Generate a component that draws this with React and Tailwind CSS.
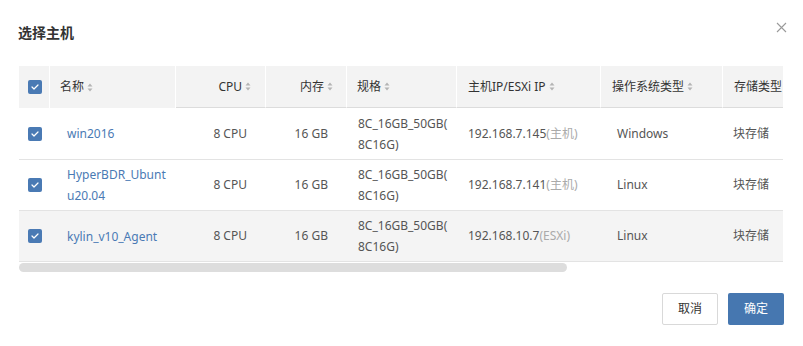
import React from 'react';

const cols = {
  check: 'w-[31px]',
  name: 'w-[126px]',
  cpu: 'w-[90px]',
  mem: 'w-[81px]',
  spec: 'w-[110px]',
  ip: 'w-[144px]',
  os: 'w-[122px]',
  store: 'w-[200px]',
};

const rows = [
  { name: 'win2016', ip: '192.168.7.145', ipType: '(主机)', os: 'Windows' },
  { name: 'HyperBDR_Ubuntu20.04', ip: '192.168.7.141', ipType: '(主机)', os: 'Linux' },
  { name: 'kylin_v10_Agent', ip: '192.168.10.7', ipType: '(ESXi)', os: 'Linux', hover: true },
];

const Check = () => (
  <span className="flex h-[14px] w-[14px] items-center justify-center rounded-[2px] bg-[#4a7ab4]">
    <svg width="8" height="6" viewBox="0 0 8 6" fill="none">
      <path d="M1 3l2 2 4-4" stroke="white" strokeWidth="1.2" strokeLinecap="round" strokeLinejoin="round" />
    </svg>
  </span>
);

const Sort = () => (
  <svg width="6" height="9" viewBox="0 0 6 9" className="ml-[3px] shrink-0">
    <path d="M3 0.5L5.5 3.5H0.5Z" fill="#b4b4b4" />
    <path d="M3 8.5L5.5 5.5H0.5Z" fill="#b4b4b4" />
  </svg>
);

const HeadCell = ({ w, children, className = '', line = true }) => (
  <div className={`${w} shrink-0 h-full flex items-center border-r border-white ${line ? 'border-b border-b-[#dcdcdc]' : ''} ${className}`}>
    {children}
  </div>
);

export default function App() {
  return (
    <div className="w-[803px] h-[346px] bg-white text-[#555] text-[12px] font-['Noto_Sans','Noto_Sans_CJK_SC',sans-serif] relative">
      <div className="flex justify-between pl-[18px] pr-[18px] pt-[24px] h-[66px] items-start">
        <h1 className="text-[14px] font-bold text-[#333] leading-[18px]">选择主机</h1>
        <svg width="11" height="11" viewBox="0 0 11 11" className="-mt-[2px] mr-[-2px]">
          <path d="M1 1L10 10M10 1L1 10" stroke="#9a9a9a" strokeWidth="1.1" />
        </svg>
      </div>

      <div className="mx-[19px] w-[764px] overflow-hidden">
        <div className="w-[1000px]">
          <div className="flex h-[42px] bg-[#f3f3f3] text-[#333]">
            <HeadCell w={cols.check} line={false} className="pl-[9px]"><Check /></HeadCell>
            <HeadCell w={cols.name} line={false} className="pl-[10px]">名称<Sort /></HeadCell>
            <HeadCell w={cols.cpu} className="justify-end pr-[14px]">CPU<Sort /></HeadCell>
            <HeadCell w={cols.mem} className="justify-end pr-[13px]">内存<Sort /></HeadCell>
            <HeadCell w={cols.spec} className="pl-[10px]">规格<Sort /></HeadCell>
            <HeadCell w={cols.ip} className="pl-[11px]">主机IP/ESXi IP<Sort /></HeadCell>
            <HeadCell w={cols.os} className="pl-[11px]">操作系统类型<Sort /></HeadCell>
            <HeadCell w={cols.store} className="pl-[11px]">存储类型<Sort /></HeadCell>
          </div>

          {rows.map((r, i) => (
            <div
              key={r.name}
              className={`flex ${i === 0 ? 'h-[52px]' : 'h-[51px]'} items-center border-b border-[#e3e3e3] ${r.hover ? 'bg-[#f4f4f4]' : 'bg-white'}`}
            >
              <div className={`${cols.check} shrink-0 pl-[9px]`}><Check /></div>
              <div className={`${cols.name} shrink-0 pl-[17px] pr-[8px]`}>
                <span className="block text-[#4a7ab4] leading-[21px] break-all">{r.name}</span>
              </div>
              <div className={`${cols.cpu} shrink-0 text-right pr-[19px]`}>8 CPU</div>
              <div className={`${cols.mem} shrink-0 text-right pr-[19px]`}>16 GB</div>
              <div className={`${cols.spec} shrink-0 pl-[11px] pr-[6px] leading-[21px] break-all [line-break:anywhere]`}>8C_16GB_50GB(8C16G)</div>
              <div className={`${cols.ip} shrink-0 pl-[11px]`}>
                {r.ip}<span className="text-[#aaa]">{r.ipType}</span>
              </div>
              <div className={`${cols.os} shrink-0 pl-[16px]`}>{r.os}</div>
              <div className={`${cols.store} shrink-0 pl-[10px]`}>块存储</div>
            </div>
          ))}
        </div>
        <div className="mt-[1px] h-[9px] w-[548px] rounded-full bg-[#dddddd]" />
      </div>

      <div className="flex justify-end gap-[10px] pr-[19px] mt-[21px]">
        <button className="h-[32px] w-[56px] rounded-[2px] border border-[#d9d9d9] bg-white text-[#333] text-[12px]">取消</button>
        <button className="h-[32px] w-[56px] rounded-[2px] bg-[#4677b0] text-white text-[12px]">确定</button>
      </div>
    </div>
  );
}
